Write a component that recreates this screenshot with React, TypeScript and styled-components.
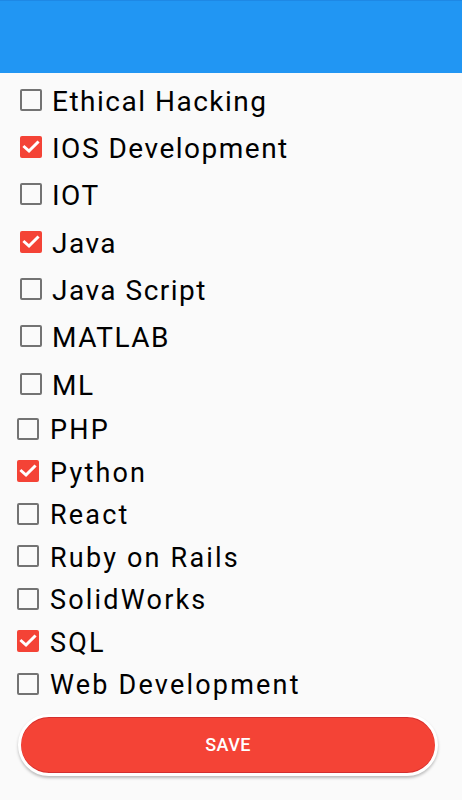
import React, { useState } from "react";
import styled, { createGlobalStyle } from "styled-components";

const Global = createGlobalStyle`
  html, body { margin: 0; padding: 0; background: #fafafa; }
  body { font-family: Roboto, "Noto Sans", sans-serif; }
  * { box-sizing: border-box; }
`;

const Page = styled.div`
  width: 462px;
  height: 800px;
  background: #fafafa;
  display: flex;
  flex-direction: column;
  overflow: hidden;
`;

const AppBar = styled.header`
  height: 73px;
  flex: none;
  background: #2196f3;
  border-top: 1px solid #1e88e5;
`;

const List = styled.div`
  padding-top: 3px;
  display: flex;
  flex-direction: column;
`;

const Group = styled.div<{ $rowH: number; $indent: number; $font: number; $gap: number; $spacing: number }>`
  display: grid;
  grid-auto-rows: ${(p) => p.$rowH}px;
  padding-left: ${(p) => p.$indent}px;
  font-size: ${(p) => p.$font}px;
  letter-spacing: ${(p) => p.$spacing}px;
  --gap: ${(p) => p.$gap}px;
`;

const Row = styled.label`
  display: flex;
  align-items: center;
  gap: var(--gap);
  color: #000;
  cursor: pointer;
  line-height: 1;
`;

const Box = styled.span<{ $on: boolean }>`
  width: 22px;
  height: 22px;
  flex: none;
  border-radius: 2px;
  border: ${(p) => (p.$on ? "none" : "2px solid #737373")};
  background: ${(p) => (p.$on ? "#f44336" : "transparent")};
  display: flex;
  align-items: center;
  justify-content: center;
`;

const Label = styled.span`
  transform: translateY(1.5px);
`;

const ButtonWrap = styled.div`
  padding: 9px 25px 0 18px;
`;

const SaveButton = styled.button`
  width: 420px;
  height: 62px;
  border-radius: 31px;
  border: 3px solid #fff;
  background: #f44336;
  box-shadow: inset 0 1px 0 #d32f2f, inset 0 -1px 0 #d32f2f, 0 2px 3px rgba(0, 0, 0, 0.25);
  color: #fff;
  font-family: Roboto, sans-serif;
  font-weight: 500;
  font-size: 18px;
  letter-spacing: 0.4px;
  cursor: pointer;
`;

const Check = () => (
  <svg width="18" height="16" viewBox="0 0 18 16">
    <polyline points="2.5,8 7,12 15.5,3.5" fill="none" stroke="#fff" strokeWidth="3" strokeLinecap="square" />
  </svg>
);

const group1 = [
  ["Ethical Hacking", false],
  ["IOS Development", true],
  ["IOT", false],
  ["Java", true],
  ["Java Script", false],
  ["MATLAB", false],
  ["ML", false],
] as const;

const group2 = [
  ["PHP", false],
  ["Python", true],
  ["React", false],
  ["Ruby on Rails", false],
  ["SolidWorks", false],
  ["SQL", true],
  ["Web Development", false],
] as const;

export default function App() {
  const [checked, setChecked] = useState<Record<string, boolean>>(() => {
    const m: Record<string, boolean> = {};
    [...group1, ...group2].forEach(([n, v]) => (m[n] = v));
    return m;
  });
  const toggle = (n: string) => setChecked((c) => ({ ...c, [n]: !c[n] }));

  const renderRow = (n: string) => (
    <Row key={n} onClick={() => toggle(n)}>
      <Box $on={checked[n]}>{checked[n] && <Check />}</Box>
      <Label>{n}</Label>
    </Row>
  );

  return (
    <Page>
      <Global />
      <AppBar />
      <List>
        <Group $rowH={47.33} $indent={20} $font={28} $gap={10} $spacing={1.5}>
          {group1.map(([n]) => renderRow(n))}
        </Group>
        <Group $rowH={42.5} $indent={17} $font={27} $gap={11} $spacing={2.2}>
          {group2.map(([n]) => renderRow(n))}
        </Group>
      </List>
      <ButtonWrap>
        <SaveButton>SAVE</SaveButton>
      </ButtonWrap>
    </Page>
  );
}
